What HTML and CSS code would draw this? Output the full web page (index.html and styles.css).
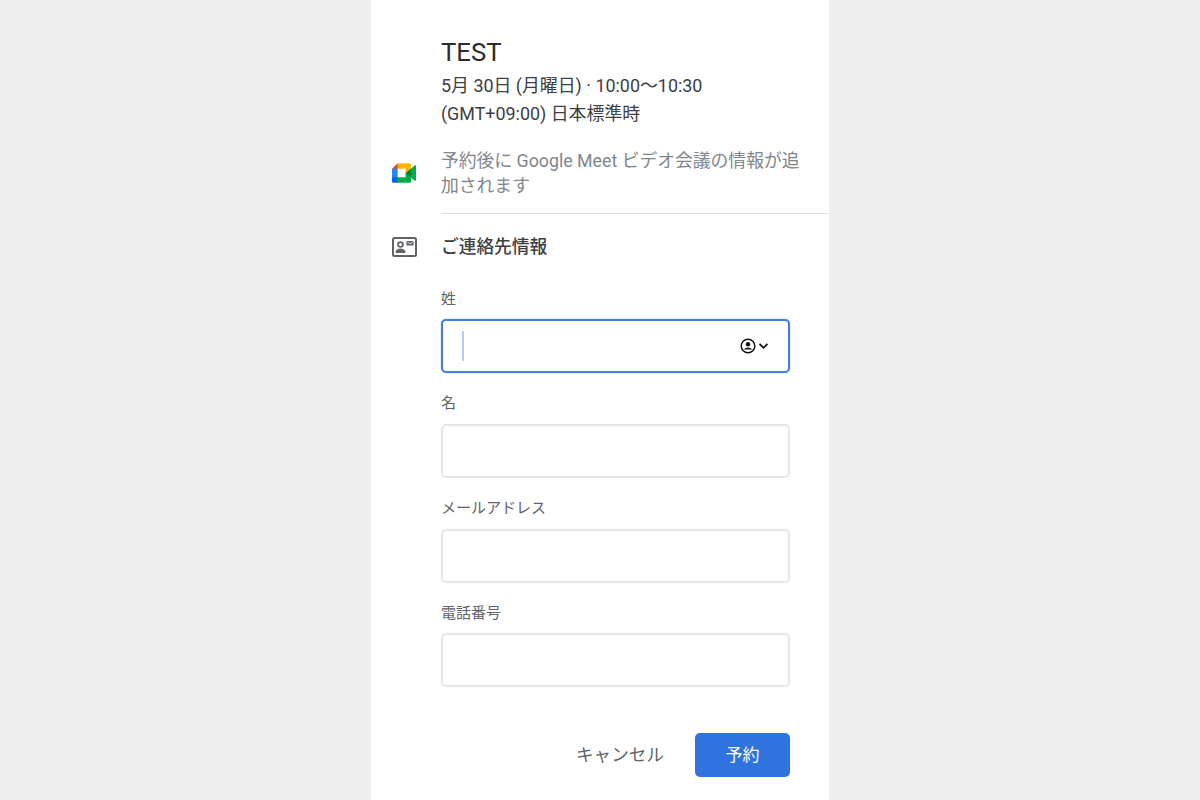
FILE: index.html
```html
<!DOCTYPE html>
<html lang="ja">

<head>
    <meta charset="UTF-8" />
    <title>予約</title>
    <link rel="stylesheet" href="styles.css">
</head>

<body>
    <main class="panel">
        <!-- Event summary -->
        <section class="summary">
            <h1 class="event-title">TEST</h1>
            <div class="event-time">5月 30日 (月曜日) · 10:00〜10:30</div>
            <div class="event-time">(GMT+09:00) 日本標準時</div>
        </section>

        <!-- Meet notice -->
        <section class="row meet-row">
            <div class="row-icon">
                <svg width="24" height="20" viewBox="0 0 87.5 72">
                    <path fill="#00832d" d="M49.5 36l8.53 9.75 11.47 7.33 2-17.02-2-16.64-11.69 6.44z" />
                    <path fill="#0066da" d="M0 51.5V66c0 3.315 2.685 6 6 6h14.5l3-10.96-3-9.54-9.95-3z" />
                    <path fill="#e94235" d="M20.5 0L0 20.5l10.55 3 9.95-3 2.95-9.41z" />
                    <path fill="#2684fc" d="M20.5 20.5H0v31h20.5z" />
                    <path fill="#00ac47" d="M82.6 8.68L69.5 19.42v33.66l13.16 10.79c1.97 1.54 4.85.135 4.85-2.37V11c0-2.535-2.945-3.925-4.91-2.32zM49.5 36v15.5h-29V72h43c3.315 0 6-2.685 6-6V53.08z" />
                    <path fill="#ffba00" d="M63.5 0h-43v20.5h29V36l20-16.57V6c0-3.315-2.685-6-6-6z" />
                </svg>
            </div>
            <p class="meet-text">予約後に Google Meet ビデオ会議の情報が追加されます</p>
        </section>

        <!-- Contact form -->
        <section class="row contact-head">
            <div class="row-icon">
                <svg width="25" height="20" viewBox="0 0 25 20">
                    <rect x="1" y="1" width="23" height="18" rx="1.5" fill="none" stroke="#5f6368" stroke-width="2" />
                    <circle cx="8.5" cy="7.5" r="2.4" fill="none" stroke="#5f6368" stroke-width="1.8" />
                    <path d="M4 15.5v-1c0-1.6 2.5-2.5 4.5-2.5s4.5.9 4.5 2.5v1z" fill="#5f6368" stroke="#5f6368" stroke-width="1" />
                    <rect x="14.5" y="4" width="7" height="4.5" fill="#5f6368" />
                    <path d="M15.5 5L18 6.8 20.5 5" fill="none" stroke="#fff" stroke-width=".8" />
                </svg>
            </div>
            <h2 class="contact-title">ご連絡先情報</h2>
        </section>

        <form class="contact-form">
            <div class="field">
                <label class="field-label">姓</label>
                <div class="input-box is-focused">
                    <span class="caret"></span>
                    <span class="autofill">
                        <svg width="16" height="16" viewBox="0 0 16 16">
                            <circle cx="8" cy="8" r="6.8" fill="none" stroke="#111" stroke-width="1.5" />
                            <circle cx="8" cy="6.2" r="2.2" fill="#111" />
                            <path d="M3.8 11.4c.9-1.3 2.6-2 4.2-2s3.3.7 4.2 2z" fill="#111" />
                        </svg>
                        <svg width="11" height="8" viewBox="0 0 11 8">
                            <path d="M1.5 1.8l4 4 4-4" fill="none" stroke="#111" stroke-width="1.7" />
                        </svg>
                    </span>
                </div>
            </div>
            <div class="field">
                <label class="field-label">名</label>
                <div class="input-box"></div>
            </div>
            <div class="field">
                <label class="field-label">メールアドレス</label>
                <div class="input-box"></div>
            </div>
            <div class="field">
                <label class="field-label">電話番号</label>
                <div class="input-box"></div>
            </div>

            <div class="actions">
                <button type="button" class="cancel-btn">キャンセル</button>
                <button type="button" class="primary-btn">予約</button>
            </div>
        </form>
    </main>
</body>

</html>
```

FILE: styles.css
```css
* {
    box-sizing: border-box;
}

body {
    margin: 0;
    height: 800px;
    overflow: hidden;
    background: #eeeeee;
    color: #3c4043;
    font-family: Roboto, "Noto Sans CJK JP", sans-serif;
}

.panel {
    width: 458px;
    height: 800px;
    margin: 0 auto;
    background: #fff;
}

.summary {
    padding: 36px 0 0 70px;
}

.event-title {
    margin: 0 0 4px;
    font-size: 25.7px;
    line-height: 32px;
    font-weight: 400;
    color: #2b2c2f;
}

.event-time {
    font-size: 17.9px;
    line-height: 28px;
    color: #3c4043;
}

.row {
    display: flex;
    align-items: center;
}

.row-icon {
    flex: none;
    width: 70px;
    padding-left: 21px;
    display: flex;
}

.meet-row {
    margin-top: 20px;
}

.meet-text {
    margin: 0;
    padding: 0 26px 0 0;
    font-size: 17.8px;
    line-height: 25px;
    color: #80868b;
}

.contact-head {
    margin: 15px 0 0 0;
    position: relative;
    padding-top: 22px;
}

.contact-head::before {
    content: "";
    position: absolute;
    top: 0;
    left: 70px;
    right: 0;
    height: 1px;
    background: #e0e0e0;
}

.contact-title {
    margin: 0;
    font-size: 17.7px;
    line-height: 24px;
    font-weight: 500;
    color: #3c4043;
}

.contact-form {
    padding: 29.6px 39px 0 70px;
}

.field {
    margin-bottom: 20.4px;
}

.field-label {
    display: block;
    font-size: 15px;
    line-height: 20px;
    margin-bottom: 10.4px;
    color: #5f6368;
}

.input-box {
    height: 54px;
    border: 2px solid #e4e5e7;
    border-radius: 5px;
    display: flex;
    align-items: center;
    justify-content: space-between;
    padding: 0 19px 0 19px;
}

.input-box.is-focused {
    border: 2px solid #3f7fd6;
    box-shadow: 0 0 1px #3f7fd6;
}

.caret {
    width: 1.5px;
    height: 30px;
    background: #b5ccf0;
}

.autofill {
    display: flex;
    align-items: center;
    gap: 2px;
    padding-top: 1px;
}

.actions {
    display: flex;
    justify-content: flex-end;
    align-items: center;
    gap: 31px;
    margin-top: 46px;
}

.cancel-btn {
    border: none;
    background: none;
    padding: 0 0 3px;
    font: inherit;
    font-size: 17.6px;
    color: #5f6368;
}

.primary-btn {
    width: 95px;
    height: 44px;
    border: none;
    border-radius: 5px;
    padding: 0 0 3px;
    background: #2f73de;
    color: #fff;
    font: inherit;
    font-size: 17px;
}
```
